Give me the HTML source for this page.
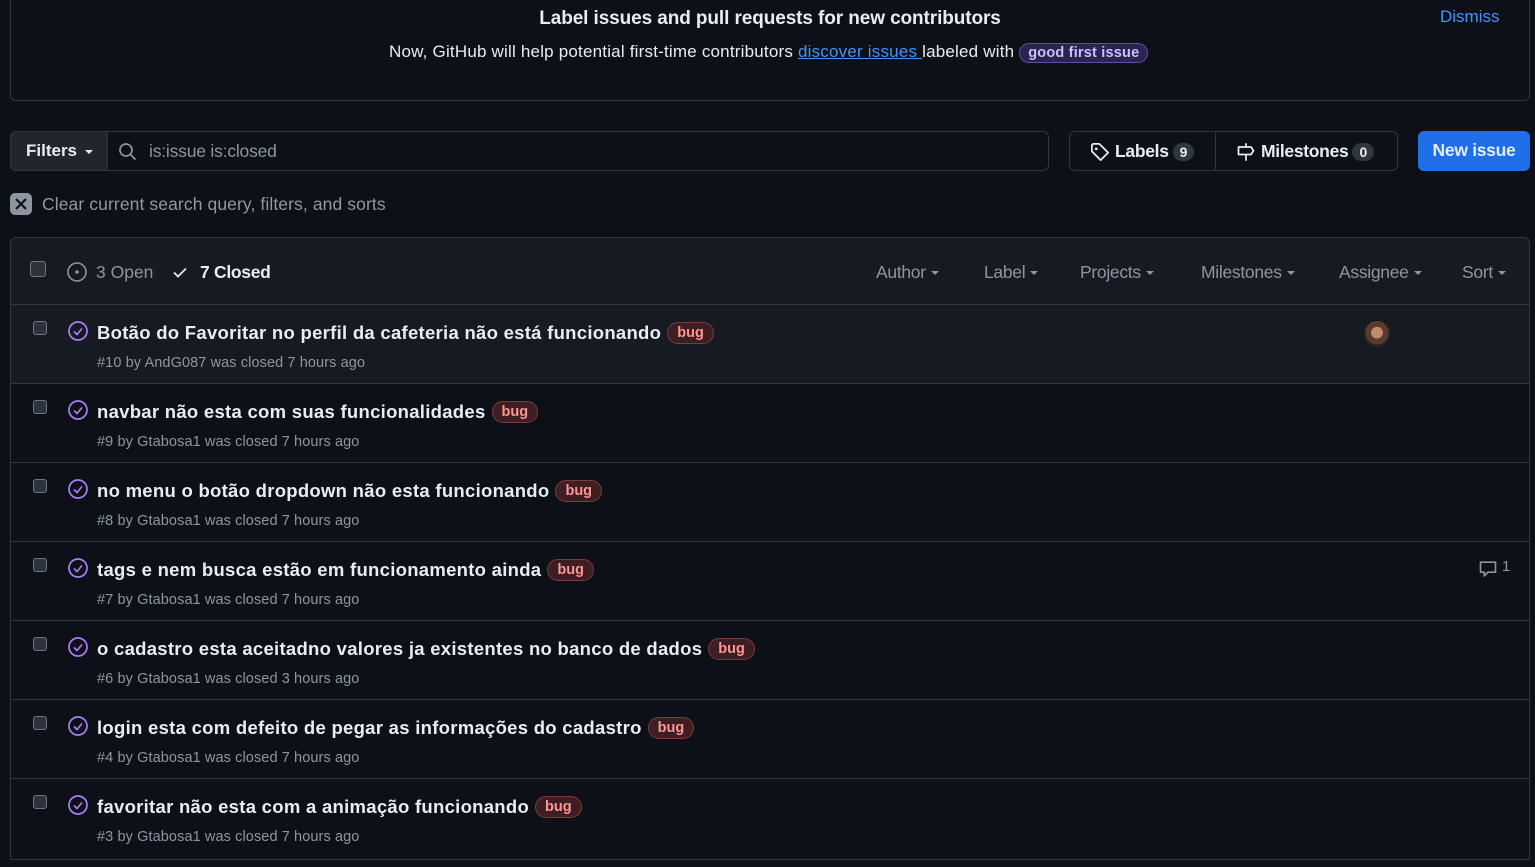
<!DOCTYPE html>
<html><head><meta charset="utf-8">
<style>
*{box-sizing:border-box;margin:0;padding:0}
body{width:1535px;height:867px;background:#0d1117;color:#e6edf3;font-family:"Liberation Sans",sans-serif;position:relative;overflow:hidden}
.a{position:absolute;white-space:nowrap}
.banner{left:10px;top:-5px;width:1520px;height:106px;border:1px solid #30363d;border-radius:6px}
.muted{color:#8d96a0}
.box{border:1px solid #30363d;border-radius:6px}
.cnt{display:inline-block;background:#31373e;border-radius:10px;padding:1px 7px;font-size:14px;margin-left:4px;color:#e6edf3}
.caret{display:inline-block;width:0;height:0;border-left:4px solid transparent;border-right:4px solid transparent;border-top:4px solid currentColor;vertical-align:middle;margin-left:5px}
.row{position:absolute;left:10px;width:1520px;height:79px;border-bottom:1px solid #30363d;border-left:1px solid #30363d;border-right:1px solid #30363d}
.cb{position:absolute;left:22px;top:16px;width:14px;height:14px;border:1px solid #6e7681;border-radius:3px;background:#2d333b}
.ic{position:absolute;left:56px;top:15px}
.t{position:absolute;left:86px;top:17px;font-size:18.5px;font-weight:bold;letter-spacing:0.28px;color:#e6edf3}
.m{position:absolute;left:86px;top:50px;font-size:14.5px;color:#8d96a0;letter-spacing:0.1px}
.bug{display:inline-block;font-size:14.5px;font-weight:bold;color:#ff9492;background:#3d1e22;border:1px solid #7d3a3e;border-radius:12px;padding:2px 9px;margin-left:6px;vertical-align:2px;letter-spacing:0}
</style></head><body>
<div class="a banner"></div>
<div class="a" style="left:0;width:1540px;text-align:center;top:8px;font-size:19px;font-weight:bold;letter-spacing:-0.1px">Label issues and pull requests for new contributors</div>
<div class="a" style="left:389px;top:42px;font-size:17px;letter-spacing:0.2px">Now, GitHub will help potential first-time contributors <span style="color:#4493f8;text-decoration:underline">discover issues </span>labeled with <span style="display:inline-block;background:#2a2450;border:1px solid #5a4fa0;border-radius:12px;padding:1px 8px;font-size:14.5px;font-weight:bold;color:#c8c0ff;letter-spacing:0.2px">good first issue</span></div>
<div class="a" style="left:1440px;top:7px;font-size:17px;color:#4493f8">Dismiss</div>

<div class="a box" style="left:10px;top:131px;width:1039px;height:40px;background:#0d1117"></div>
<div class="a" style="left:10px;top:131px;width:98px;height:40px;background:#21262d;border:1px solid #30363d;border-radius:6px 0 0 6px;font-size:17px;font-weight:bold;padding:9px 0 0 15px">Filters<span class="caret" style="margin-left:8px"></span></div>
<svg class="a" style="left:118px;top:142px" width="20" height="20" viewBox="0 0 20 20"><circle cx="8" cy="8" r="6" fill="none" stroke="#8d96a0" stroke-width="1.7"/><path d="M12.5 12.5L17 17" stroke="#8d96a0" stroke-width="1.8" stroke-linecap="round"/></svg>
<div class="a muted" style="left:149px;top:141px;font-size:17.5px;letter-spacing:-0.2px">is:issue is:closed</div>

<div class="a box" style="left:1069px;top:131px;width:329px;height:40px"></div>
<div class="a" style="left:1215px;top:132px;width:1px;height:38px;background:#30363d"></div>
<svg class="a" style="left:1090px;top:142px" width="20" height="20" viewBox="0 0 16 16"><path d="M1.5 2.5v5l7 7 6-6-7-7h-5z" fill="none" stroke="#e6edf3" stroke-width="1.4" stroke-linejoin="round"/><circle cx="5" cy="5.5" r="1.1" fill="#e6edf3"/></svg>
<div class="a" style="left:1115px;top:141px;font-size:17.5px;font-weight:bold;letter-spacing:-0.3px">Labels<span class="cnt">9</span></div>
<svg class="a" style="left:1236px;top:142px" width="20" height="20" viewBox="0 0 16 16"><path d="M8 1v3M8 10v5M2 4h10l2 3-2 3H2z" fill="none" stroke="#e6edf3" stroke-width="1.4" stroke-linejoin="round"/></svg>
<div class="a" style="left:1261px;top:141px;font-size:17.5px;font-weight:bold;letter-spacing:-0.3px">Milestones<span class="cnt">0</span></div>
<div class="a" style="left:1418px;top:131px;width:112px;height:40px;background:#1f6feb;border-radius:6px;font-size:17.5px;font-weight:bold;text-align:center;padding-top:9px;letter-spacing:-0.3px">New issue</div>

<div class="a" style="left:10px;top:193px;width:22px;height:22px;background:#8d96a0;border-radius:5px"></div>
<svg class="a" style="left:10px;top:193px" width="22" height="22"><path d="M6 6l10 10M16 6L6 16" stroke="#0d1117" stroke-width="2.2"/></svg>
<div class="a muted" style="left:42px;top:194px;font-size:17.5px;color:#9198a1;letter-spacing:0.1px">Clear current search query, filters, and sorts</div>

<div class="a" style="left:10px;top:237px;width:1520px;height:68px;background:#161b22;border:1px solid #30363d;border-radius:6px 6px 0 0"></div>
<div class="a" style="left:30px;top:261px;width:16px;height:16px;border:1px solid #6e7681;border-radius:3px;background:#2d333b"></div>
<svg class="a" style="left:66px;top:261px" width="22" height="22"><circle cx="11" cy="11" r="9" fill="none" stroke="#8d96a0" stroke-width="1.6"/><circle cx="11" cy="11" r="1.8" fill="#8d96a0"/></svg>
<div class="a muted" style="left:96px;top:262px;font-size:17.5px">3 Open</div>
<svg class="a" style="left:171px;top:263px" width="18" height="18"><path d="M3 9.5l4 4 8-8" fill="none" stroke="#e6edf3" stroke-width="1.7"/></svg>
<div class="a" style="left:200px;top:262px;font-size:17.5px;font-weight:bold;letter-spacing:-0.3px">7 Closed</div>
<div class="a muted" style="left:876px;top:262px;font-size:17.5px;letter-spacing:-0.3px">Author<span class="caret"></span></div>
<div class="a muted" style="left:984px;top:262px;font-size:17.5px;letter-spacing:-0.3px">Label<span class="caret"></span></div>
<div class="a muted" style="left:1080px;top:262px;font-size:17.5px;letter-spacing:-0.3px">Projects<span class="caret"></span></div>
<div class="a muted" style="left:1201px;top:262px;font-size:17.5px;letter-spacing:-0.3px">Milestones<span class="caret"></span></div>
<div class="a muted" style="left:1339px;top:262px;font-size:17.5px;letter-spacing:-0.3px">Assignee<span class="caret"></span></div>
<div class="a muted" style="left:1462px;top:262px;font-size:17.5px;letter-spacing:-0.3px">Sort<span class="caret"></span></div>

<div class="row" style="top:305px;background:#161b22"><span class="cb"></span><svg class="ic" width="22" height="22"><circle cx="11" cy="11" r="9" fill="none" stroke="#ab7df8" stroke-width="1.7"/><path d="M7 11.5l3 3 5-6" fill="none" stroke="#ab7df8" stroke-width="1.7"/></svg><div class="t">Botão do Favoritar no perfil da cafeteria não está funcionando<span class="bug">bug</span></div><div class="m">#10 by AndG087 was closed 7 hours ago</div><div class="a" style="left:1353px;top:16px;width:26px;height:26px;border-radius:50%;background:radial-gradient(circle at 50% 45%,#c08a70 0 30%,#5a3a2e 31% 60%,#2a2220 61%)"></div></div>
<div class="row" style="top:384px"><span class="cb"></span><svg class="ic" width="22" height="22"><circle cx="11" cy="11" r="9" fill="none" stroke="#ab7df8" stroke-width="1.7"/><path d="M7 11.5l3 3 5-6" fill="none" stroke="#ab7df8" stroke-width="1.7"/></svg><div class="t">navbar não esta com suas funcionalidades<span class="bug">bug</span></div><div class="m">#9 by Gtabosa1 was closed 7 hours ago</div></div>
<div class="row" style="top:463px"><span class="cb"></span><svg class="ic" width="22" height="22"><circle cx="11" cy="11" r="9" fill="none" stroke="#ab7df8" stroke-width="1.7"/><path d="M7 11.5l3 3 5-6" fill="none" stroke="#ab7df8" stroke-width="1.7"/></svg><div class="t">no menu o botão dropdown não esta funcionando<span class="bug">bug</span></div><div class="m">#8 by Gtabosa1 was closed 7 hours ago</div></div>
<div class="row" style="top:542px"><span class="cb"></span><svg class="ic" width="22" height="22"><circle cx="11" cy="11" r="9" fill="none" stroke="#ab7df8" stroke-width="1.7"/><path d="M7 11.5l3 3 5-6" fill="none" stroke="#ab7df8" stroke-width="1.7"/></svg><div class="t">tags e nem busca estão em funcionamento ainda<span class="bug">bug</span></div><div class="m">#7 by Gtabosa1 was closed 7 hours ago</div><svg class="a" style="left:1467px;top:17px" width="20" height="20" viewBox="0 0 16 16"><path d="M2 2.5h12v8H8l-3 3v-3H2z" fill="none" stroke="#8d96a0" stroke-width="1.3" stroke-linejoin="round"/></svg><div class="a muted" style="left:1491px;top:16px;font-size:15px">1</div></div>
<div class="row" style="top:621px"><span class="cb"></span><svg class="ic" width="22" height="22"><circle cx="11" cy="11" r="9" fill="none" stroke="#ab7df8" stroke-width="1.7"/><path d="M7 11.5l3 3 5-6" fill="none" stroke="#ab7df8" stroke-width="1.7"/></svg><div class="t">o cadastro esta aceitadno valores ja existentes no banco de dados<span class="bug">bug</span></div><div class="m">#6 by Gtabosa1 was closed 3 hours ago</div></div>
<div class="row" style="top:700px"><span class="cb"></span><svg class="ic" width="22" height="22"><circle cx="11" cy="11" r="9" fill="none" stroke="#ab7df8" stroke-width="1.7"/><path d="M7 11.5l3 3 5-6" fill="none" stroke="#ab7df8" stroke-width="1.7"/></svg><div class="t">login esta com defeito de pegar as informações do cadastro<span class="bug">bug</span></div><div class="m">#4 by Gtabosa1 was closed 7 hours ago</div></div>
<div class="row" style="top:779px;height:81px"><span class="cb"></span><svg class="ic" width="22" height="22"><circle cx="11" cy="11" r="9" fill="none" stroke="#ab7df8" stroke-width="1.7"/><path d="M7 11.5l3 3 5-6" fill="none" stroke="#ab7df8" stroke-width="1.7"/></svg><div class="t">favoritar não esta com a animação funcionando<span class="bug">bug</span></div><div class="m">#3 by Gtabosa1 was closed 7 hours ago</div></div>
</body></html>
